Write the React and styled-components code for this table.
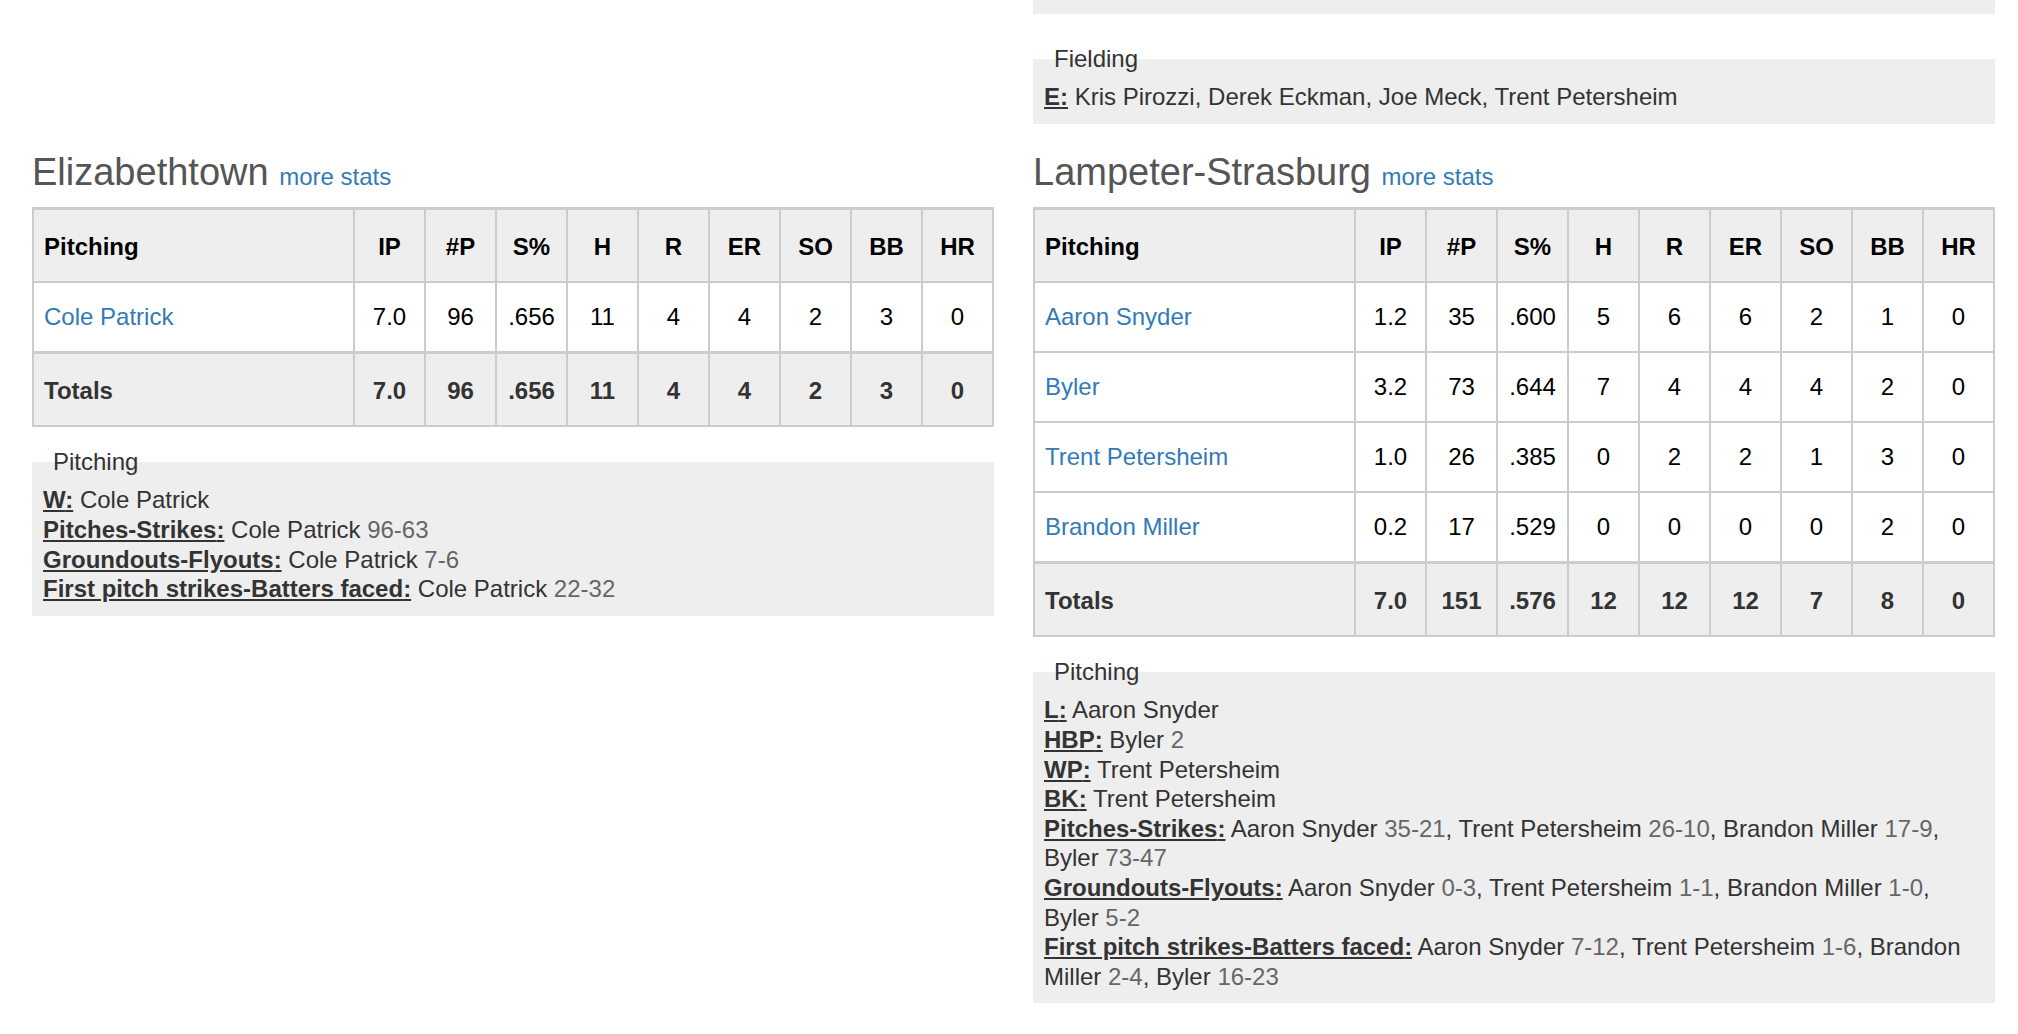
import React from "react";
import styled, { createGlobalStyle } from "styled-components";

const GlobalStyle = createGlobalStyle`
  html, body {
    margin: 0;
    background: #fff;
  }

  body {
    font-family: "Liberation Sans", Arial, Helvetica, sans-serif;
    color: #333;
  }
`;

const Page = styled.div`
  display: grid;
  grid-template-columns: 962px 962px;
  column-gap: 39px;
  padding: 0 23px 0 32px;
`;

const Column = styled.div`
  display: flex;
  flex-direction: column;
  min-width: 0;
`;

const BoxTail = styled.div`
  height: 14px;
  background: #eee;
  margin-bottom: 31px;
`;

const Notes = styled.fieldset`
  margin: ${({ $top }) => $top || "0"} 0 0;
  padding: 10px 11px 12px;
  min-width: 0;
  border: 0;
  background: #eee;
  font-size: 24px;
  line-height: 29.6px;
  color: #333;
`;

const Legend = styled.legend`
  padding: 0 10px;
  font-size: 24px;
  line-height: 27px;
  color: #333;
`;

const Line = styled.div``;

const Label = styled.span`
  font-weight: bold;
  text-decoration: underline;
  text-underline-offset: 2px;
`;

const Num = styled.span`
  color: #666;
`;

const Title = styled.h2`
  margin: 28px 0 14px;
  font-size: 38px;
  font-weight: normal;
  line-height: 1.1;
  color: #555;
`;

const More = styled.a`
  font-size: 24px;
  color: #337ab7;
  text-decoration: none;
`;

const Table = styled.table`
  width: 100%;
  table-layout: fixed;
  border-collapse: collapse;
  border: 2px solid #ccc;
  font-size: 24px;
  line-height: 28px;
`;

const StatCol = styled.col`
  width: 71px;
`;

const Th = styled.th`
  padding: 23px ${({ $name }) => ($name ? "10px" : "2px")} 20px;
  border: 2px solid #ccc;
  border-top-width: 3px;
  background: #eee;
  color: #000;
  font-weight: bold;
  text-align: ${({ $name }) => ($name ? "left" : "center")};
  vertical-align: middle;
`;

const Td = styled.td`
  padding: ${({ $total }) => ($total ? "23px" : "20px")} ${({ $name }) => ($name ? "10px" : "2px")}
    ${({ $total }) => ($total ? "20px" : "20px")};
  border: 2px solid #ccc;
  border-top-width: ${({ $total }) => ($total ? "3px" : "2px")};
  background: ${({ $total }) => ($total ? "#eee" : "#fff")};
  color: ${({ $total }) => ($total ? "#333" : "#000")};
  font-weight: ${({ $total }) => ($total ? "bold" : "normal")};
  text-align: ${({ $name }) => ($name ? "left" : "center")};
  vertical-align: middle;
  white-space: nowrap;
  overflow: hidden;
`;

const PlayerLink = styled.a`
  color: #337ab7;
  text-decoration: none;
`;

const statKeys = ["ip", "np", "sp", "h", "r", "er", "so", "bb", "hr"];
const statLabels = ["IP", "#P", "S%", "H", "R", "ER", "SO", "BB", "HR"];

const row = (name, ...vals) => {
  const r = { name };
  statKeys.forEach((k, i) => (r[k] = vals[i]));
  return r;
};

const teams = [
  {
    name: "Elizabethtown",
    pitchers: [row("Cole Patrick", "7.0", 96, ".656", 11, 4, 4, 2, 3, 0)],
    totals: row("Totals", "7.0", 96, ".656", 11, 4, 4, 2, 3, 0),
    notes: [
      { label: "W", items: [["Cole Patrick"]] },
      { label: "Pitches-Strikes", items: [["Cole Patrick", "96-63"]] },
      { label: "Groundouts-Flyouts", items: [["Cole Patrick", "7-6"]] },
      { label: "First pitch strikes-Batters faced", items: [["Cole Patrick", "22-32"]] },
    ],
  },
  {
    name: "Lampeter-Strasburg",
    pitchers: [
      row("Aaron Snyder", "1.2", 35, ".600", 5, 6, 6, 2, 1, 0),
      row("Byler", "3.2", 73, ".644", 7, 4, 4, 4, 2, 0),
      row("Trent Petersheim", "1.0", 26, ".385", 0, 2, 2, 1, 3, 0),
      row("Brandon Miller", "0.2", 17, ".529", 0, 0, 0, 0, 2, 0),
    ],
    totals: row("Totals", "7.0", 151, ".576", 12, 12, 12, 7, 8, 0),
    notes: [
      { label: "L", items: [["Aaron Snyder"]] },
      { label: "HBP", items: [["Byler", "2"]] },
      { label: "WP", items: [["Trent Petersheim"]] },
      { label: "BK", items: [["Trent Petersheim"]] },
      {
        label: "Pitches-Strikes",
        items: [
          ["Aaron Snyder", "35-21"],
          ["Trent Petersheim", "26-10"],
          ["Brandon Miller", "17-9"],
          ["Byler", "73-47"],
        ],
      },
      {
        label: "Groundouts-Flyouts",
        items: [
          ["Aaron Snyder", "0-3"],
          ["Trent Petersheim", "1-1"],
          ["Brandon Miller", "1-0"],
          ["Byler", "5-2"],
        ],
      },
      {
        label: "First pitch strikes-Batters faced",
        items: [
          ["Aaron Snyder", "7-12"],
          ["Trent Petersheim", "1-6"],
          ["Brandon Miller", "2-4"],
          ["Byler", "16-23"],
        ],
      },
    ],
  },
];

const NoteLine = ({ label, items }) => (
  <Line>
    <Label>{label}:</Label>{" "}
    {items.map(([who, num], i) => (
      <React.Fragment key={who}>
        {who}
        {num && (
          <>
            {" "}
            <Num>{num}</Num>
          </>
        )}
        {i < items.length - 1 && ", "}
      </React.Fragment>
    ))}
  </Line>
);

const TeamPitching = ({ team }) => (
  <Column>
    <Title>
      {team.name} <More href="#">more stats</More>
    </Title>
    <Table>
      <colgroup>
        <col />
        {statKeys.map((k) => (
          <StatCol key={k} />
        ))}
      </colgroup>
      <thead>
        <tr>
          <Th $name>Pitching</Th>
          {statLabels.map((l) => (
            <Th key={l}>{l}</Th>
          ))}
        </tr>
      </thead>
      <tbody>
        {team.pitchers.map((p) => (
          <tr key={p.name}>
            <Td $name>
              <PlayerLink href="#">{p.name}</PlayerLink>
            </Td>
            {statKeys.map((k) => (
              <Td key={k}>{p[k]}</Td>
            ))}
          </tr>
        ))}
      </tbody>
      <tfoot>
        <tr>
          <Td $name $total>
            Totals
          </Td>
          {statKeys.map((k) => (
            <Td key={k} $total>
              {team.totals[k]}
            </Td>
          ))}
        </tr>
      </tfoot>
    </Table>
    <Notes $top="21px">
      <Legend>Pitching</Legend>
      {team.notes.map((n) => (
        <NoteLine key={n.label} {...n} />
      ))}
    </Notes>
  </Column>
);

export default function App() {
  return (
    <>
      <GlobalStyle />
      <Page>
        <Column />
        <Column>
          <BoxTail />
          <Notes>
            <Legend>Fielding</Legend>
            <NoteLine
              label="E"
              items={[["Kris Pirozzi"], ["Derek Eckman"], ["Joe Meck"], ["Trent Petersheim"]]}
            />
          </Notes>
        </Column>
        {teams.map((t) => (
          <TeamPitching key={t.name} team={t} />
        ))}
      </Page>
    </>
  );
}
